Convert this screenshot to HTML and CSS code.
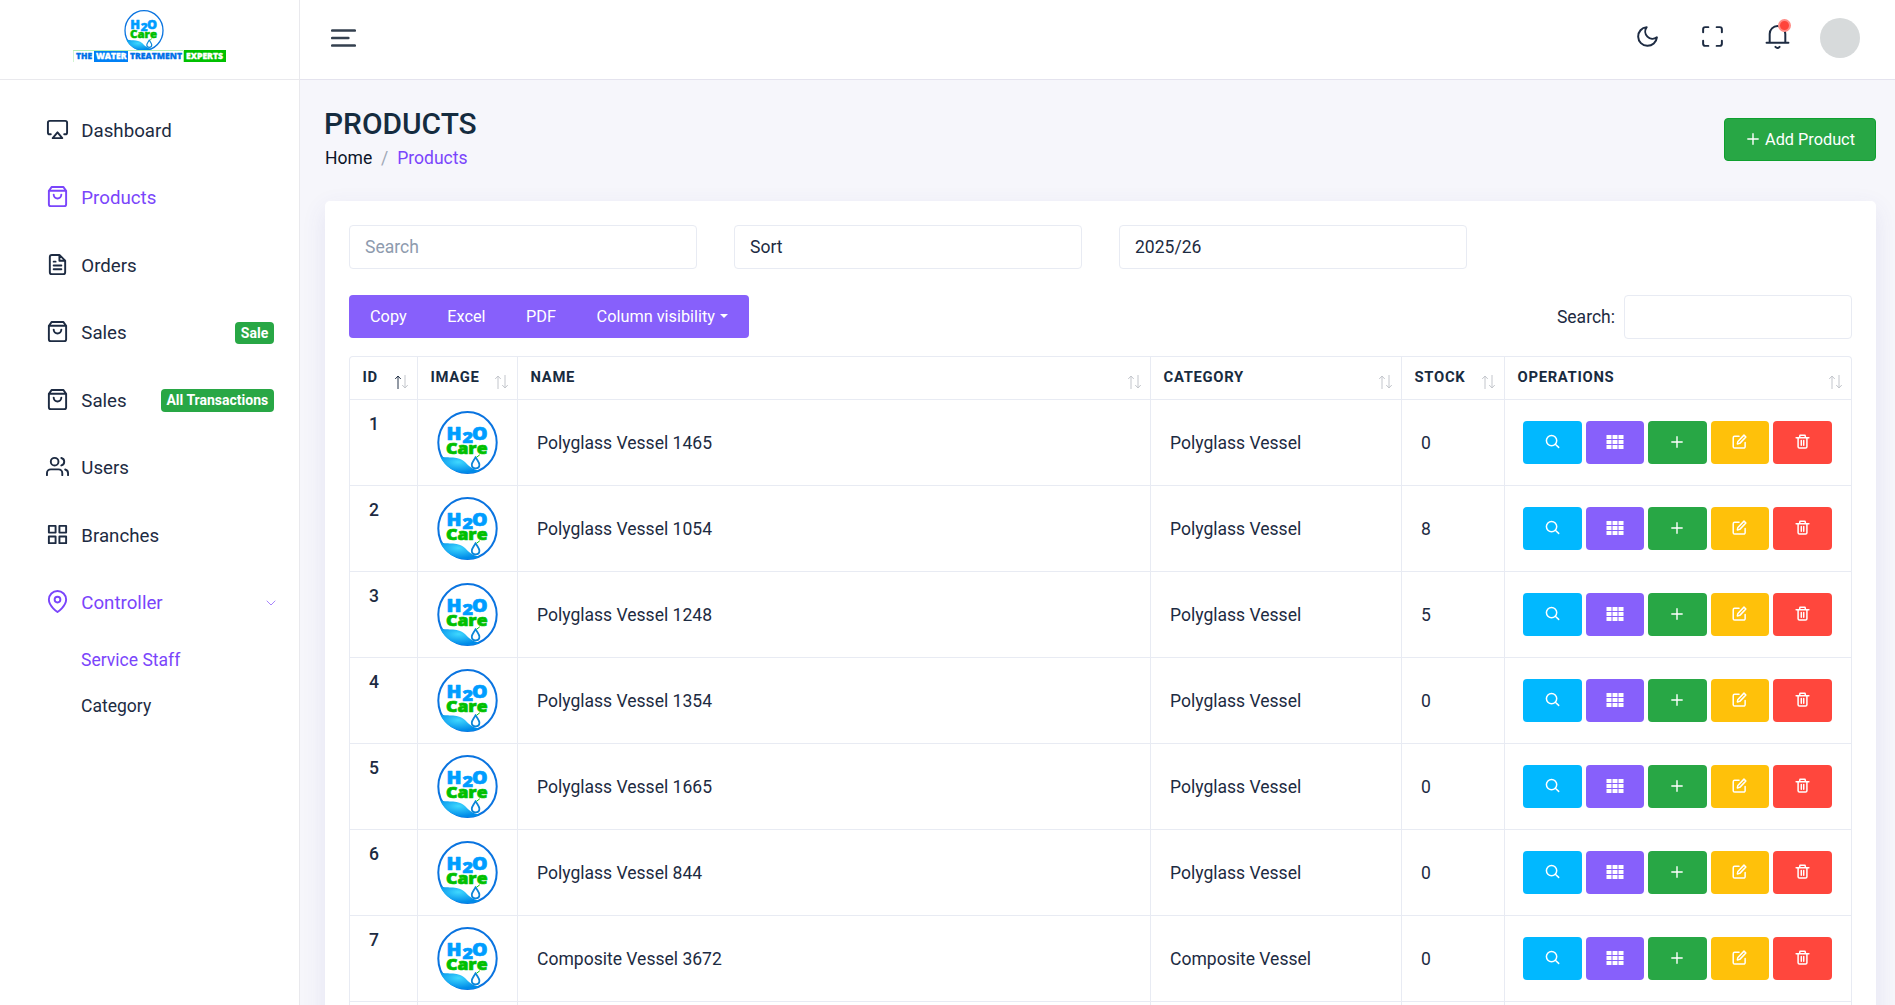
FILE: index.html
```html
<!DOCTYPE html>
<html lang="en">
<head>
<meta charset="utf-8">
<title>Products</title>
<link rel="stylesheet" href="styles.css">
</head>
<body>
<svg class="defs" width="0" height="0">
  <defs>
    <radialGradient id="water" cx="45%" cy="35%" r="60%">
      <stop offset="0" stop-color="#3fd8ff"/><stop offset="1" stop-color="#008be8"/>
    </radialGradient>
    <symbol id="brand" viewBox="0 0 61 63">
      <ellipse cx="30.5" cy="31.5" rx="29.2" ry="30.4" fill="#fff" stroke="#0a74e0" stroke-width="2"/>
      <path d="M3 45C8 48 20 44 28 51C32 55 35 59 44 59.500C29 66 9 61 3 45Z" fill="url(#water)" stroke="none"/>
      <path d="M38.600 46C37 49.500 34.800 51.500 34.800 53.700C34.800 58.500 42.400 58.500 42.400 53.700C42.400 51.500 40.200 49.500 38.600 46Z" fill="#fff" stroke="#0b86d8" stroke-width="1.800"/>
      <path d="M40 46L42.500 44" fill="none" stroke="#0c0" stroke-width="1"/>
      <g class="brand-text">
        <text x="9.500" y="28.900" font-size="17.500" textLength="15" lengthAdjust="spacingAndGlyphs" fill="#009dff" stroke="#009dff">H</text>
        <text x="25.500" y="31.700" font-size="15.500" textLength="10.500" lengthAdjust="spacingAndGlyphs" fill="#009dff" stroke="#009dff">2</text>
        <text x="35" y="28.900" font-size="17.500" textLength="15.500" lengthAdjust="spacingAndGlyphs" fill="#009dff" stroke="#009dff">O</text>
        <text x="9" y="42.500" font-size="16" textLength="41.500" lengthAdjust="spacingAndGlyphs" fill="#00c000" stroke="#00c000">Care</text>
      </g>
    </symbol>
    <symbol id="airplay" viewBox="0 0 24 24"><path d="M5 17H4a2 2 0 0 1-2-2V5a2 2 0 0 1 2-2h16a2 2 0 0 1 2 2v10a2 2 0 0 1-2 2h-1M12 15l5 6H7z"/></symbol>
    <symbol id="bag" viewBox="0 0 24 24"><path d="M6 2 3 6v14a2 2 0 0 0 2 2h14a2 2 0 0 0 2-2V6l-3-4zM3 6h18M16 10a4 4 0 0 1-8 0"/></symbol>
    <symbol id="file" viewBox="0 0 24 24"><path d="M14 2H6a2 2 0 0 0-2 2v16a2 2 0 0 0 2 2h12a2 2 0 0 0 2-2V8zM14 2v6h6M16 13H8M16 17H8M10 9H8"/></symbol>
    <symbol id="users" viewBox="0 0 24 24"><path d="M17 21v-2a4 4 0 0 0-4-4H5a4 4 0 0 0-4 4v2M23 21v-2a4 4 0 0 0-3-3.870M16 3.130a4 4 0 0 1 0 7.750"/><circle cx="9" cy="7" r="4"/></symbol>
    <symbol id="grid" viewBox="0 0 24 24"><path d="M3 3h7v7H3zM14 3h7v7h-7zM14 14h7v7h-7zM3 14h7v7H3z"/></symbol>
    <symbol id="pin" viewBox="0 0 24 24"><path d="M21 10c0 7-9 13-9 13s-9-6-9-13a9 9 0 0 1 18 0z"/><circle cx="12" cy="10" r="3"/></symbol>
    <symbol id="moon" viewBox="0 0 24 24"><path d="M21 12.790A9 9 0 1 1 11.210 3 7 7 0 0 0 21 12.790z"/></symbol>
    <symbol id="expand" viewBox="0 0 24 24"><path d="M8 3H5a2 2 0 0 0-2 2v3m18 0V5a2 2 0 0 0-2-2h-3m0 18h3a2 2 0 0 0 2-2v-3M3 16v3a2 2 0 0 0 2 2h3"/></symbol>
    <symbol id="bell" viewBox="0 0 24 24"><path d="M1.500 18h21M4.500 18V9.500a7.500 7.500 0 0 1 15 0V18M10 22q2 2 4 0"/></symbol>
    <symbol id="search" viewBox="0 0 16 16"><circle cx="7" cy="7" r="5.500"/><path d="m11 11 3.600 3.300"/></symbol>
    <symbol id="cells" viewBox="0 0 18 14"><path d="M.5 0h5v4h-5zM6.500 0h5v4h-5zM12.500 0h5v4h-5zM.5 5h5v4h-5zM6.500 5h5v4h-5zM12.500 5h5v4h-5zM.5 10h5v4h-5zM6.500 10h5v4h-5zM12.500 10h5v4h-5z" fill="#fff" stroke="none"/></symbol>
    <symbol id="plus" viewBox="0 0 12 12"><path d="M6 .8v10.400M.8 6h10.400"/></symbol>
    <symbol id="edit" viewBox="0 0 16 16"><path d="M7.500 2.500H2.800A1.500 1.500 0 0 0 1.300 4v9.500A1.500 1.500 0 0 0 2.800 15h9.700a1.500 1.500 0 0 0 1.500-1.500V9M12.800 1.200l2 2L8.300 10l-2.600.600.600-2.600z"/></symbol>
    <symbol id="trash" viewBox="0 0 16 16"><path d="M1.200 4h13.600M3.300 4v9.500A1.500 1.500 0 0 0 4.800 15h6.400a1.500 1.500 0 0 0 1.500-1.500V4M4.800 4l.5-2.700h5.400l.5 2.700M6.700 7v5M9.300 7v5"/></symbol>
    <symbol id="up" viewBox="0 0 6 14"><path d="M3 14V1.500M.5 3.700 3 1l2.500 2.700"/></symbol>
    <symbol id="down" viewBox="0 0 6 14"><path d="M3 0v12.500M.5 10.300 3 13l2.500-2.700"/></symbol>
  </defs>
</svg>

<div class="app">
  <aside class="sidebar">
    <div class="logo">
      <svg class="logo-mark"><use href="#brand"/></svg>
      <svg class="logo-strip" viewBox="0 0 153 12">
        <rect x=".5" y=".5" width="110" height="12" fill="#fff" stroke="#b4edb4"/>
        <rect x="21" y="1" width="34" height="11" fill="#0080f5"/>
        <rect x="111" y="0" width="42" height="12" fill="#00c000"/>
        <g class="brand-text" font-size="7.800">
          <text x="3" y="9" textLength="16" lengthAdjust="spacingAndGlyphs" fill="#0070e8" stroke="#0070e8">THE</text>
          <text x="23" y="9" textLength="30.500" lengthAdjust="spacingAndGlyphs" fill="#fff" stroke="#fff">WATER</text>
          <text x="57" y="9" textLength="52" lengthAdjust="spacingAndGlyphs" fill="#0070e8" stroke="#0070e8">TREATMENT</text>
          <text x="113" y="9" textLength="37" lengthAdjust="spacingAndGlyphs" fill="#fff" stroke="#fff">EXPERTS</text>
        </g>
      </svg>
    </div>
    <nav class="menu">
      <a class="item"><svg class="icon"><use href="#airplay"/></svg><span>Dashboard</span></a>
      <a class="item active"><svg class="icon"><use href="#bag"/></svg><span>Products</span></a>
      <a class="item"><svg class="icon"><use href="#file"/></svg><span>Orders</span></a>
      <a class="item"><svg class="icon"><use href="#bag"/></svg><span>Sales</span><b class="badge">Sale</b></a>
      <a class="item"><svg class="icon"><use href="#bag"/></svg><span>Sales</span><b class="badge">All Transactions</b></a>
      <a class="item"><svg class="icon"><use href="#users"/></svg><span>Users</span></a>
      <a class="item"><svg class="icon"><use href="#grid"/></svg><span>Branches</span></a>
      <a class="item active"><svg class="icon"><use href="#pin"/></svg><span>Controller</span><svg class="chevron" viewBox="0 0 10 6"><path d="M1 1l4 4 4-4"/></svg></a>
      <div class="submenu">
        <a class="subitem active">Service Staff</a>
        <a class="subitem">Category</a>
      </div>
    </nav>
  </aside>

  <div class="main">
    <header class="topbar">
      <svg class="burger" viewBox="0 0 25 18"><path d="M1.300 1.500h22.400M1.300 9h16M1.300 16.500h22.400"/></svg>
      <div class="tools">
        <svg class="tool"><use href="#moon"/></svg>
        <svg class="tool"><use href="#expand"/></svg>
        <span class="bell"><svg class="tool"><use href="#bell"/></svg><i class="dot"></i></span>
        <span class="avatar"></span>
      </div>
    </header>

    <main class="content">
      <div class="page-head">
        <div>
          <h1>PRODUCTS</h1>
          <div class="crumbs"><span>Home</span><span class="slash">/</span><span class="active">Products</span></div>
        </div>
        <button class="add"><svg><use href="#plus"/></svg>Add Product</button>
      </div>

      <section class="card">
        <div class="filters">
          <div class="field placeholder">Search</div>
          <div class="field">Sort</div>
          <div class="field">2025/26</div>
        </div>
        <div class="table-tools">
          <div class="exports"><span>Copy</span><span>Excel</span><span>PDF</span><span>Column visibility<i class="caret"></i></span></div>
          <label class="find">Search:<input type="text"></label>
        </div>
        <div class="table-wrap">
        <table>
          <colgroup><col class="c-id"><col class="c-img"><col class="c-name"><col class="c-cat"><col class="c-stock"><col class="c-ops"></colgroup>
          <thead><tr>
            <th><div class="th">ID<span class="sort asc"><svg><use href="#up"/></svg><svg><use href="#down"/></svg></span></div></th>
            <th><div class="th">IMAGE<span class="sort"><svg><use href="#up"/></svg><svg><use href="#down"/></svg></span></div></th>
            <th><div class="th">NAME<span class="sort"><svg><use href="#up"/></svg><svg><use href="#down"/></svg></span></div></th>
            <th><div class="th">CATEGORY<span class="sort"><svg><use href="#up"/></svg><svg><use href="#down"/></svg></span></div></th>
            <th><div class="th">STOCK<span class="sort"><svg><use href="#up"/></svg><svg><use href="#down"/></svg></span></div></th>
            <th><div class="th">OPERATIONS<span class="sort"><svg><use href="#up"/></svg><svg><use href="#down"/></svg></span></div></th>
          </tr></thead>
          <tbody>
            <tr><td class="id">1</td><td class="img"><svg><use href="#brand"/></svg></td><td>Polyglass Vessel 1465</td><td>Polyglass Vessel</td><td>0</td><td class="ops"><div><a class="cyan"><svg><use href="#search"/></svg></a><a class="violet"><svg class="wide"><use href="#cells"/></svg></a><a class="green"><svg class="small"><use href="#plus"/></svg></a><a class="amber"><svg><use href="#edit"/></svg></a><a class="red"><svg><use href="#trash"/></svg></a></div></td></tr>
            <tr><td class="id">2</td><td class="img"><svg><use href="#brand"/></svg></td><td>Polyglass Vessel 1054</td><td>Polyglass Vessel</td><td>8</td><td class="ops"><div><a class="cyan"><svg><use href="#search"/></svg></a><a class="violet"><svg class="wide"><use href="#cells"/></svg></a><a class="green"><svg class="small"><use href="#plus"/></svg></a><a class="amber"><svg><use href="#edit"/></svg></a><a class="red"><svg><use href="#trash"/></svg></a></div></td></tr>
            <tr><td class="id">3</td><td class="img"><svg><use href="#brand"/></svg></td><td>Polyglass Vessel 1248</td><td>Polyglass Vessel</td><td>5</td><td class="ops"><div><a class="cyan"><svg><use href="#search"/></svg></a><a class="violet"><svg class="wide"><use href="#cells"/></svg></a><a class="green"><svg class="small"><use href="#plus"/></svg></a><a class="amber"><svg><use href="#edit"/></svg></a><a class="red"><svg><use href="#trash"/></svg></a></div></td></tr>
            <tr><td class="id">4</td><td class="img"><svg><use href="#brand"/></svg></td><td>Polyglass Vessel 1354</td><td>Polyglass Vessel</td><td>0</td><td class="ops"><div><a class="cyan"><svg><use href="#search"/></svg></a><a class="violet"><svg class="wide"><use href="#cells"/></svg></a><a class="green"><svg class="small"><use href="#plus"/></svg></a><a class="amber"><svg><use href="#edit"/></svg></a><a class="red"><svg><use href="#trash"/></svg></a></div></td></tr>
            <tr><td class="id">5</td><td class="img"><svg><use href="#brand"/></svg></td><td>Polyglass Vessel 1665</td><td>Polyglass Vessel</td><td>0</td><td class="ops"><div><a class="cyan"><svg><use href="#search"/></svg></a><a class="violet"><svg class="wide"><use href="#cells"/></svg></a><a class="green"><svg class="small"><use href="#plus"/></svg></a><a class="amber"><svg><use href="#edit"/></svg></a><a class="red"><svg><use href="#trash"/></svg></a></div></td></tr>
            <tr><td class="id">6</td><td class="img"><svg><use href="#brand"/></svg></td><td>Polyglass Vessel 844</td><td>Polyglass Vessel</td><td>0</td><td class="ops"><div><a class="cyan"><svg><use href="#search"/></svg></a><a class="violet"><svg class="wide"><use href="#cells"/></svg></a><a class="green"><svg class="small"><use href="#plus"/></svg></a><a class="amber"><svg><use href="#edit"/></svg></a><a class="red"><svg><use href="#trash"/></svg></a></div></td></tr>
            <tr><td class="id">7</td><td class="img"><svg><use href="#brand"/></svg></td><td>Composite Vessel 3672</td><td>Composite Vessel</td><td>0</td><td class="ops"><div><a class="cyan"><svg><use href="#search"/></svg></a><a class="violet"><svg class="wide"><use href="#cells"/></svg></a><a class="green"><svg class="small"><use href="#plus"/></svg></a><a class="amber"><svg><use href="#edit"/></svg></a><a class="red"><svg><use href="#trash"/></svg></a></div></td></tr>
            <tr><td></td><td></td><td></td><td></td><td></td><td></td></tr>
          </tbody>
        </table>
        </div>
      </section>
    </main>
  </div>
</div>
</body>
</html>
```
FILE: styles.css
```css
* { box-sizing: border-box; }
body {
  margin: 0;
  height: 1005px;
  overflow: hidden;
  background: #f6f6fb;
  color: #1d2b42;
  font: 17.550px/1.5 Roboto, sans-serif;
}
svg { display: block; flex: none; fill: none; stroke: currentColor; stroke-linecap: round; stroke-linejoin: round; }
.defs { position: absolute; }
.app { display: flex; height: 1005px; overflow: hidden; }
.active { color: #7a45fb; }

.sidebar { width: 300px; flex: none; background: #fff; border-right: 1px solid #e9e9ed; }
.logo { height: 80px; padding: 10px 0 0 73px; border-bottom: 1px solid #e9e9ed; }
.logo-mark { width: 42px; height: 41px; margin: 0 0 -1px 50px; }
.logo-strip { width: 153px; height: 12px; stroke: none; }
.brand-text { font-family: "Open Sans", sans-serif; font-weight: 800; stroke-width: .7; }
.logo-strip .brand-text { stroke-width: .3; }
.menu { padding-top: 16.800px; }
.item { display: flex; align-items: center; height: 67.500px; padding: 0 25px 0 46px; font-size: 18.700px; }
.icon { width: 23px; height: 23px; margin-right: 12.300px; stroke-width: 2; position: relative; top: -1.500px; }
.badge { margin-left: auto; padding: 0 5.800px; border-radius: 4px; background: #28a745; color: #fff; font-size: 14px; line-height: 22.500px; }
.chevron { width: 10px; height: 6px; margin-left: auto; margin-right: -2px; opacity: .65; }
.submenu { padding: 0 0 0 81px; }
.subitem { display: block; height: 46px; line-height: 46px; }

.main { flex: 1; min-width: 0; }
.topbar { height: 80px; display: flex; align-items: center; justify-content: space-between; padding: 0 35px 3px 31px; background: #fff; border-bottom: 1px solid #e4e3ee; }
.burger { width: 25px; height: 18px; stroke-width: 2.700; color: #34404f; }
.tools { display: flex; align-items: center; }
.tool { width: 25px; height: 25px; stroke-width: 1.900; margin-right: 40px; position: relative; top: -2px; }
.bell { position: relative; }
.bell .tool { margin-right: 30px; }
.dot { position: absolute; left: 13px; top: -7px; width: 13px; height: 13px; border-radius: 50%; background: #ff443a; border: 2px solid #ff8c86; }
.avatar { width: 40px; height: 40px; border-radius: 50%; background: #d7dadb; }

.content { padding: 23px 19px 0 25px; }
.page-head { display: flex; justify-content: space-between; height: 98px; }
h1 { margin: 0 0 0 -1px; font-size: 29.900px; font-weight: 500; line-height: 41px; color: #152c3f; }
.crumbs { display: flex; line-height: 28px; color: #0c1428; }
.crumbs .active { color: #7a45fb; }
.slash { width: 25px; text-align: center; color: #a0a8b6; }
.add { margin-top: 15px; height: 43px; width: 152px; padding: 0 0 0 2px; display: flex; align-items: center; justify-content: center; gap: 6px; border: 1px solid #0fa02f; border-radius: 4px; background: #28a745; color: #fff; font: 16.300px Roboto, sans-serif; }
.add svg { width: 12px; height: 12px; stroke-width: 1.400; margin-top: -2px; }

.card { height: 900px; padding: 24px; background: #fff; border-radius: 5px; box-shadow: 0 8px 24px rgba(69, 65, 170, .1); }
.filters { display: flex; gap: 37px; height: 44px; margin-bottom: 26px; }
.field { width: 348px; border: 1px solid #e8ebf3; border-radius: 4px; padding-left: 15px; line-height: 42px; }
.placeholder { color: #8e9bae; }
.table-tools { display: flex; justify-content: space-between; height: 44px; margin-bottom: 17px; }
.exports { display: flex; align-items: center; justify-content: space-between; width: 400px; height: 43px; padding: 1px 21px 0; border-radius: 4px; background: #8760fb; color: #fff; font-size: 16.300px; }
.exports span { display: flex; align-items: center; }
.caret { margin: -3px 0 0 5px; border: 4px solid transparent; border-top-color: #fff; border-bottom: 0; }
.find { display: flex; align-items: center; gap: 9px; }
.find input { width: 228px; height: 44px; margin: 0; border: 1px solid #e8ebf3; border-radius: 4px; }

.table-wrap { width: 1503px; border: 1px solid #e8ebf3; border-bottom: 0; border-radius: 4px 4px 0 0; }
table { width: 1501px; table-layout: fixed; border-collapse: separate; border-spacing: 0; }
.c-id { width: 68px; } .c-img { width: 100px; } .c-name { width: 633px; } .c-cat { width: 251px; } .c-stock { width: 103px; } .c-ops { width: 346px; }
th, td { padding: 0 0 0 19px; border-right: 1px solid #e8ebf3; border-bottom: 1px solid #e8ebf3; text-align: left; }
th:last-child, td:last-child { border-right: 0; }
th { height: 43px; padding: 0 9px 0 12.500px; font-size: 14.800px; font-weight: 700; letter-spacing: .7px; color: #182b40; }
.th { display: flex; align-items: center; justify-content: space-between; margin-top: -2px; }
.sort { display: flex; gap: 1.500px; margin-top: 9px; color: #c3c6cc; stroke-width: 1; }
.sort svg { width: 6px; height: 14px; }
.asc svg:first-child { color: #26344a; }
td { height: 86px; padding-top: 2px; }
.id { vertical-align: top; padding-top: 11px; font-weight: 500; }
td.img { padding: 0 0 0 19px; }
.img svg { width: 61px; height: 63px; }
td.ops { padding: 0 0 0 18px; }
.ops div { display: flex; gap: 4px; }
.ops a { width: 58.500px; height: 43px; padding-bottom: 2px; display: flex; align-items: center; justify-content: center; border-radius: 4px; color: #fff; }
.ops svg { width: 15px; height: 15px; stroke-width: 1.600; }
.ops svg.wide { width: 18px; height: 14px; }
.ops svg.small { width: 12px; height: 12px; stroke-width: 1.400; }
.cyan { background: #01b8ff; } .violet { background: #8760fb; } .green { background: #28a745; } .amber { background: #ffc10a; } .red { background: #ff473d; }
```
